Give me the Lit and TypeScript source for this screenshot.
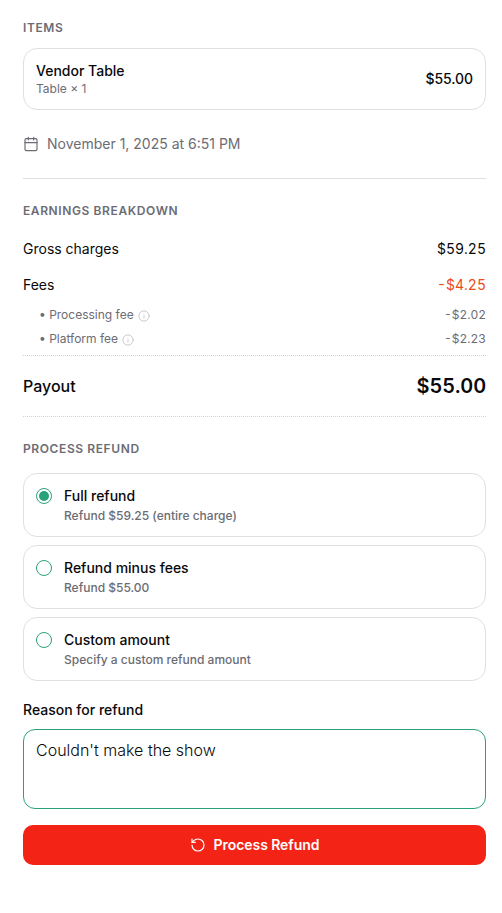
import { LitElement, html, css, svg } from "lit";
import { customElement, property, state } from "lit/decorators.js";

const calendarIcon = svg`<path d="M8 2v4M16 2v4M3 10h18"/><rect x="3" y="4" width="18" height="18" rx="2"/>`;
const infoIcon = svg`<circle cx="12" cy="12" r="10.3"/><path d="M12 16.5v-5M12 7.8h.01"/>`;
const undoIcon = svg`<path d="M3 12a9 9 0 1 0 9-9 9.75 9.75 0 0 0-6.74 2.74L3 8"/><path d="M3 3v5h5"/>`;

const icon = (shape: unknown, size: number) => html`<svg
  width=${size} height=${size} viewBox="0 0 24 24" fill="none" stroke="currentColor"
  stroke-width="1.75" stroke-linecap="round" stroke-linejoin="round" aria-hidden="true">${shape}</svg>`;

@customElement("refund-option")
class RefundOption extends LitElement {
  @property() label = "";
  @property() detail = "";
  @property({ type: Boolean }) checked = false;

  static styles = css`
    :host {
      display: flex;
      gap: 12px;
      box-sizing: border-box;
      height: 64px;
      padding: 12px;
      border: 1px solid #dfdfe1;
      border-radius: 14px;
      cursor: pointer;
    }
    .radio {
      display: grid;
      place-items: center;
      box-sizing: border-box;
      flex: none;
      width: 16px;
      height: 16px;
      margin-top: 2px;
      border: 1px solid #29a27c;
      border-radius: 50%;
    }
    .dot {
      width: 10px;
      height: 10px;
      border-radius: 50%;
      background: #29a27c;
    }
    .label { font-size: 14px; line-height: 20px; font-weight: 500; color: #09090b; }
    .detail { margin-top: 2px; font-size: 12px; line-height: 16px; font-weight: 500; color: #6c6c74; }
  `;

  render() {
    return html`
      <span class="radio">${this.checked ? html`<span class="dot"></span>` : null}</span>
      <div>
        <div class="label">${this.label}</div>
        <div class="detail">${this.detail}</div>
      </div>`;
  }
}

@customElement("app-root")
class AppRoot extends LitElement {
  @state() private selected = 0;

  private options = [
    { label: "Full refund", detail: "Refund $59.25 (entire charge)" },
    { label: "Refund minus fees", detail: "Refund $55.00" },
    { label: "Custom amount", detail: "Specify a custom refund amount" },
  ];

  private fees = [
    { label: "Processing fee", amount: "-$2.02" },
    { label: "Platform fee", amount: "-$2.23" },
  ];

  static styles = css`
    :host {
      display: block;
      box-sizing: border-box;
      min-height: 913px;
      padding: 20px 16px 0 23px;
      background: #fff;
      color: #09090b;
      font-family: Inter, "Liberation Sans", sans-serif;
      font-size: 14px;
      line-height: 20px;
    }
    svg { display: block; flex: none; }
    h2 {
      margin: 0;
      font-size: 12px;
      line-height: 16px;
      font-weight: 600;
      letter-spacing: 0.6px;
      text-transform: uppercase;
      color: #6c6c74;
    }
    .row { display: flex; align-items: center; justify-content: space-between; }
    .item {
      box-sizing: border-box;
      height: 62px;
      margin-top: 12px;
      padding: 0 12px;
      border: 1px solid #dfdfe1;
      border-radius: 14px;
      font-weight: 500;
    }
    .price { letter-spacing: -0.08px; }
    .quantity { font-size: 12px; line-height: 16px; font-weight: 400; color: #6c6c74; }
    .date {
      display: flex;
      align-items: center;
      gap: 8px;
      margin-top: 24px;
      padding-bottom: 24px;
      border-bottom: 1px solid #dfdfe1;
      color: #6c6c74;
    }
    .earnings { margin-top: 24px; }
    .amount { font-variant-numeric: tabular-nums; }
    .gross { margin-top: 20px; }
    .fees { margin-top: 16px; }
    .negative { color: #ed4b1c; }
    .fee-list { display: grid; gap: 8px; margin-top: 12px; padding-bottom: 8px; border-bottom: 1px dotted #d4d4d8; }
    .fee { padding-left: 16px; font-size: 12px; line-height: 16px; color: #6c6c74; }
    .fee-name { display: flex; align-items: center; gap: 4px; }
    .info { padding-top: 2px; color: #c4c4c8; }
    .payout { box-sizing: border-box; height: 61px; border-bottom: 1px dotted #d4d4d8; font-size: 16px; font-weight: 500; }
    .total { font-size: 20px; line-height: 28px; font-weight: 600; letter-spacing: -0.12px; }
    .refund { margin-top: 24px; }
    .options { display: grid; gap: 8px; margin-top: 16px; }
    .reason-label { display: block; margin-top: 19px; font-weight: 500; }
    textarea {
      display: block;
      box-sizing: border-box;
      width: 100%;
      height: 80px;
      margin: 9px 0 0;
      padding: 8px 12px;
      border: 1px solid #29a27c;
      border-radius: 12px;
      outline: none;
      resize: none;
      background: #fff;
      color: #09090b;
      font: 300 16px/24px Inter, "Liberation Sans", sans-serif;
    }
    button {
      display: flex;
      align-items: center;
      justify-content: center;
      gap: 8px;
      width: 100%;
      height: 40px;
      margin-top: 16px;
      padding: 0;
      border: 0;
      border-radius: 10px;
      background: #f32315;
      color: #fff;
      font: 600 14px/20px Inter, "Liberation Sans", sans-serif;
      letter-spacing: -0.06px;
    }
  `;

  render() {
    return html`
      <h2>Items</h2>
      <div class="item row">
        <div>
          <div>Vendor Table</div>
          <div class="quantity">Table × 1</div>
        </div>
        <span class="price">$55.00</span>
      </div>
      <div class="date">${icon(calendarIcon, 16)}<span>November 1, 2025 at 6:51 PM</span></div>

      <h2 class="earnings">Earnings Breakdown</h2>
      <div class="gross row"><span>Gross charges</span><span class="amount">$59.25</span></div>
      <div class="fees row"><span>Fees</span><span class="amount negative">-$4.25</span></div>
      <div class="fee-list">
        ${this.fees.map((fee) => html`
          <div class="fee row">
            <span class="fee-name"><span>• ${fee.label}</span><span class="info">${icon(infoIcon, 12)}</span></span>
            <span class="amount">${fee.amount}</span>
          </div>`)}
      </div>
      <div class="payout row"><span>Payout</span><span class="amount total">$55.00</span></div>

      <h2 class="refund">Process Refund</h2>
      <div class="options">
        ${this.options.map((option, index) => html`
          <refund-option .label=${option.label} .detail=${option.detail}
            .checked=${index === this.selected} @click=${() => (this.selected = index)}></refund-option>`)}
      </div>

      <label class="reason-label" for="reason">Reason for refund</label>
      <textarea id="reason" .value=${"Couldn't make the show"}></textarea>
      <button type="button">${icon(undoIcon, 16)}<span>Process Refund</span></button>
    `;
  }
}
